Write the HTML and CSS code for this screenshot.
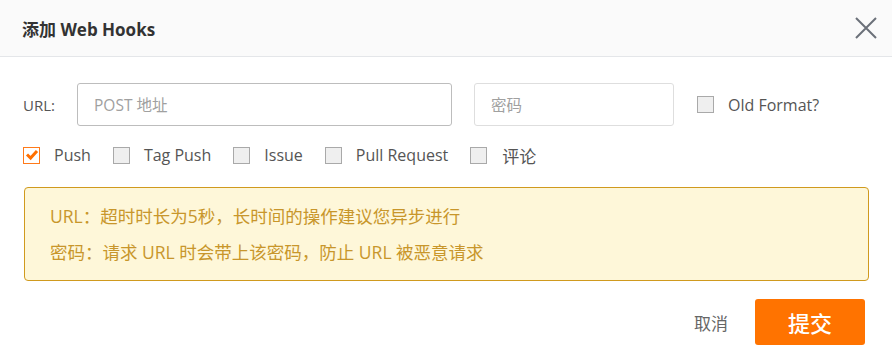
FILE: index.html
```html
<!DOCTYPE html>
<html lang="zh-CN">
<head>
<meta charset="utf-8">
<title>添加 Web Hooks</title>
<link rel="stylesheet" href="styles.css">
</head>
<body>
<div class="dialog">
  <div class="dialog-header">
    <div class="dialog-title">添加 Web Hooks</div>
    <button class="close" aria-label="关闭">
      <svg width="22" height="22" viewBox="0 0 22 22"><path d="M1 1 L21 21 M21 1 L1 21" stroke="#6b7079" stroke-width="2" fill="none"/></svg>
    </button>
  </div>
  <div class="dialog-body">
    <div class="row-url">
      <label class="url-label">URL:</label>
      <div class="input input-url"><span class="placeholder">POST 地址</span></div>
      <div class="input input-pass"><span class="placeholder">密码</span></div>
      <label class="check"><span class="box"></span><span class="check-text">Old Format?</span></label>
    </div>
    <div class="row-events">
      <label class="check"><span class="box checked"><svg width="14" height="14" viewBox="0 0 14 14"><path d="M2 6.5 L5.6 10 L12 3" stroke="#ff6f00" stroke-width="3" fill="none" stroke-linejoin="miter"/></svg></span><span class="check-text">Push</span></label>
      <label class="check"><span class="box"></span><span class="check-text">Tag Push</span></label>
      <label class="check"><span class="box"></span><span class="check-text">Issue</span></label>
      <label class="check"><span class="box"></span><span class="check-text">Pull Request</span></label>
      <label class="check"><span class="box"></span><span class="check-text cjk">评论</span></label>
    </div>
    <div class="alert">
      <p>URL：超时时长为5秒，长时间的操作建议您异步进行</p>
      <p>密码：请求 URL 时会带上该密码，防止 URL 被恶意请求</p>
    </div>
    <div class="footer">
      <button class="btn-cancel">取消</button>
      <button class="btn-submit">提交</button>
    </div>
  </div>
</div>
</body>
</html>
```

FILE: styles.css
```css
* { box-sizing: border-box; }
html, body { margin: 0; padding: 0; background: #fff; }
body {
  font-family: "Open Sans", "Noto Sans CJK SC", sans-serif;
  color: #555;
}
.dialog { width: 892px; height: 363px; }
.dialog-header {
  height: 57px;
  background: #fafafa;
  border-bottom: 1px solid #e4e6e9;
  display: flex;
  align-items: center;
  justify-content: space-between;
  padding: 0 15px 0 22px;
}
.dialog-title {
  font-size: 17px;
  font-weight: 700;
  color: #333;
}
.close {
  border: 0;
  background: none;
  padding: 0;
  width: 22px;
  height: 22px;
  margin-top: -1px;
  cursor: pointer;
}
.close svg { display: block; }
.dialog-body { padding: 26px 24px 0 23px; }
.row-url {
  display: flex;
  align-items: center;
  height: 43px;
}
.url-label {
  width: 54px;
  font-size: 15px;
  color: #555;
}
.input {
  height: 43px;
  border: 1px solid #bdbdbd;
  border-radius: 3px;
  display: flex;
  align-items: center;
  padding-left: 16px;
}
.input-url { width: 375px; }
.input-pass { width: 200px; margin-left: 22px; border-color: #dedede; }
.placeholder { font-size: 15.5px; color: #a0a0a0; }
.row-url .check { margin-left: 23px; }
.check {
  display: flex;
  align-items: center;
  font-size: 16px;
  color: #555;
}
.box {
  width: 17px;
  height: 17px;
  border: 1px solid #a9a9a9;
  background: #efefef;
  display: flex;
  align-items: center;
  justify-content: center;
  flex: none;
}
.box.checked { border-color: #ff7a1a; background: #fff; }
.check-text { margin-left: 14px; }
.check-text.cjk { font-size: 17px; margin-left: 15px; }
.row-events {
  display: flex;
  align-items: center;
  gap: 22px;
  margin-top: 17px;
  height: 24px;
}
.alert {
  margin-top: 20px;
  width: 845px;
  margin-left: 1px;
  border: 1px solid #d09a1e;
  border-radius: 4px;
  background: #fef7d9;
  padding: 10px 25px 10px 25px;
  color: #c8962b;
  font-size: 17.5px;
}
.alert p { margin: 0; line-height: 36px; }
.footer {
  display: flex;
  justify-content: flex-end;
  align-items: center;
  margin-top: 18px;
  padding-right: 3px;
}
.btn-cancel {
  border: 0;
  background: none;
  font-family: inherit;
  font-size: 17px;
  color: #666;
  padding: 0;
  margin-right: 27px;
}
.btn-submit {
  width: 110px;
  height: 46px;
  border: 0;
  border-radius: 3px;
  background: #ff7300;
  color: #fff;
  font-family: inherit;
  font-size: 22px;
  font-weight: 500;
}
```
